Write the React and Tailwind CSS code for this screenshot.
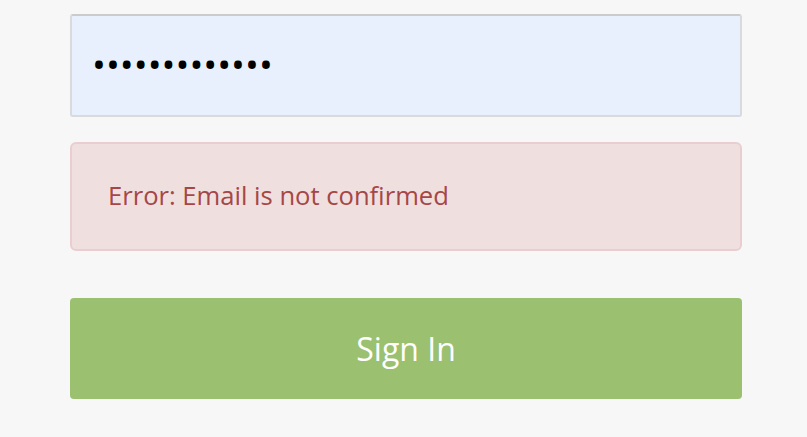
import React from "react";

export default function App() {
  return (
    <div
      className="min-h-screen bg-[#f7f7f7] pl-[70px] pr-[65px] pt-[14px]"
      style={{ fontFamily: "'Open Sans', sans-serif" }}
    >
      <form className="flex flex-col" onSubmit={(e) => e.preventDefault()}>
        <input
          type="password"
          defaultValue="passwordvalue"
          className="h-[103px] w-full rounded-[3px] border-2 border-[#d9d9de] border-t-[#cbcbcb] bg-[#e8f0fe] px-[20px] pb-[4px] text-[37px] text-black outline-none"
        />
        <div className="mt-[25px] flex h-[109px] items-center rounded-[6px] border-2 border-[#e9cdd1] bg-[#f0dfdf] px-[36px] text-[25.6px] text-[#a54747]">
          Error: Email is not confirmed
        </div>
        <button
          type="submit"
          className="mt-[47px] h-[101px] w-full rounded-[4px] bg-[#9bc070] text-[32px] text-white"
        >
          Sign In
        </button>
      </form>
    </div>
  );
}
